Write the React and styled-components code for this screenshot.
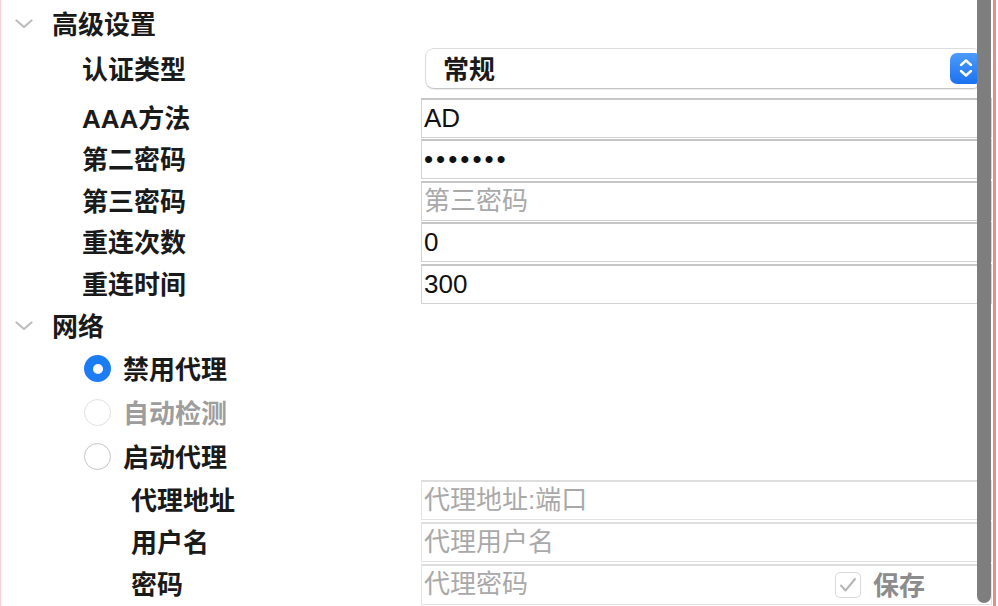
import React from "react";
import styled, { createGlobalStyle } from "styled-components";

const GlobalStyle = createGlobalStyle`
  html, body { margin: 0; padding: 0; background: #fff; }
  body {
    font-family: "Liberation Sans", "Noto Sans CJK SC", sans-serif;
    overflow: hidden;
  }
  * { box-sizing: border-box; }
`;

const Window = styled.div`
  position: relative;
  width: 998px;
  height: 606px;
  overflow: hidden;
  background: #fff;
  border-left: 1px solid #f3cfcf;
  padding: 3px 6px 0 0;
  display: flex;
  flex-direction: column;
  font-size: 26px;
  color: #1a1a1a;
`;

const SectionHeader = styled.div`
  height: 42px;
  flex: none;
  display: flex;
  align-items: center;
  gap: 19px;
  padding-left: 14px;
  font-weight: 700;
`;

const Text = styled.span`
  padding-bottom: ${(p) => (p.$nudge === undefined ? 3 : p.$nudge)}px;
  white-space: nowrap;
`;

const FieldRow = styled.div`
  flex: none;
  display: grid;
  grid-template-columns: ${(p) => 421 - 1 - p.$indent}px 1fr;
  align-items: center;
  height: ${(p) => p.$height || 42}px;
  padding-left: ${(p) => p.$indent}px;
`;

const SelectRow = styled(FieldRow)`
  height: auto;
  padding-top: 2px;
  padding-bottom: 8px;
`;

const Label = styled.span`
  font-weight: 700;
  color: #1a1a1a;
  white-space: nowrap;
  padding-top: ${(p) => p.$nudge || 0}px;
  padding-bottom: 3px;
`;

const PopUp = styled.div`
  height: 41px;
  margin: 0 10px 0 4px;
  background: #fff;
  border: 1px solid #dcdcdc;
  border-bottom-color: #c4c4c4;
  border-radius: 9px;
  box-shadow: 0 1px 1px rgba(0, 0, 0, 0.08);
  display: flex;
  align-items: center;
  justify-content: space-between;
  padding-left: 17px;
  padding-right: 0;
  font-weight: 700;
`;

const Stepper = styled.div`
  width: 32px;
  height: 31px;
  border-radius: 7px;
  background: linear-gradient(#4c9bf9, #1b72f0);
  display: flex;
  align-items: center;
  justify-content: center;
  margin-right: -1px;
`;

const InputBox = styled.input`
  display: block;
  width: 100%;
  height: 40px;
  margin: 0;
  padding: 0 2px;
  border: 1px solid ${(p) => (p.$light ? "#e3e3e3" : "#d2d2d2")};
  border-top: 2px solid ${(p) => (p.$light ? "#dedede" : "#c6c6c6")};
  outline: none;
  background: #fff;
  font-family: "Liberation Sans", "Noto Sans CJK SC", sans-serif;
  font-size: 26px;
  color: #111;
  letter-spacing: ${(p) => p.$spacing || 0}px;
  &::placeholder {
    color: #a9a9a9;
    opacity: 1;
  }
`;

const ComboBox = styled.div`
  height: 41px;
  margin-top: 1px;
  border: 1px solid #e3e3e3;
  border-top: 2px solid #dedede;
  display: flex;
  align-items: center;
  padding-right: 66px;
`;

const BareInput = styled.input`
  flex: 1;
  min-width: 0;
  height: 100%;
  border: none;
  outline: none;
  padding: 0 2px;
  background: transparent;
  font-family: "Liberation Sans", "Noto Sans CJK SC", sans-serif;
  font-size: 26px;
  &::placeholder {
    color: #a9a9a9;
    opacity: 1;
  }
`;

const CheckLabel = styled.label`
  display: flex;
  align-items: center;
  gap: 12px;
  font-weight: 700;
  color: #8c8c8c;
`;

const CheckBox = styled.span`
  width: 26px;
  height: 26px;
  border: 1.5px solid #d9d9d9;
  border-radius: 5px;
  background: #fff;
  display: flex;
  align-items: center;
  justify-content: center;
`;

const RadioRow = styled.label`
  flex: none;
  height: 44px;
  display: flex;
  align-items: center;
  gap: 12px;
  padding-left: 83px;
  font-weight: 700;
  color: ${(p) => (p.$disabled ? "#9d9d9d" : "#1a1a1a")};
`;

const RadioDot = styled.span`
  width: 27px;
  height: 27px;
  border-radius: 50%;
  flex: none;
  display: flex;
  align-items: center;
  justify-content: center;
  background: ${(p) => (p.$checked ? "#1c7cf4" : "#fff")};
  border: ${(p) =>
    p.$checked ? "none" : p.$disabled ? "1.5px solid #e0e0e0" : "1.5px solid #c4c4c4"};
  &::after {
    content: "";
    display: ${(p) => (p.$checked ? "block" : "none")};
    width: 10px;
    height: 10px;
    border-radius: 50%;
    background: #fff;
  }
`;

const Scrollbar = styled.div`
  position: absolute;
  right: 7px;
  top: -12px;
  bottom: 3px;
  width: 14px;
  border-radius: 7px;
  background: #7e7e7e;
`;

const EdgeLine = styled.div`
  position: absolute;
  right: 2px;
  top: 0;
  bottom: 0;
  width: 3px;
  background: #e68e8e;
`;

const Chevron = () => (
  <svg width="18" height="10" viewBox="0 0 18 10">
    <polyline
      points="1.5,1.5 9,8 16.5,1.5"
      fill="none"
      stroke="#bdbdbd"
      strokeWidth="2.2"
      strokeLinecap="round"
      strokeLinejoin="round"
    />
  </svg>
);

const StepperIcon = () => (
  <svg width="14" height="20" viewBox="0 0 14 20">
    <polyline points="2,7 7,2.5 12,7" fill="none" stroke="#fff" strokeWidth="2.4" strokeLinecap="round" strokeLinejoin="round" />
    <polyline points="2,13 7,17.5 12,13" fill="none" stroke="#fff" strokeWidth="2.4" strokeLinecap="round" strokeLinejoin="round" />
  </svg>
);

const CheckIcon = () => (
  <svg width="18" height="16" viewBox="0 0 18 16">
    <polyline points="2,8.5 6.5,13.5 16,2" fill="none" stroke="#b5b5b5" strokeWidth="2" strokeLinecap="round" strokeLinejoin="round" />
  </svg>
);

const fields = [
  { label: "AAA方法", value: "AD" },
  { label: "第二密码", value: "1234567", type: "password" },
  { label: "第三密码", placeholder: "第三密码", type: "password" },
  { label: "重连次数", value: "0" },
  { label: "重连时间", value: "300" },
];

const radios = [
  { label: "禁用代理", checked: true },
  { label: "自动检测", disabled: true },
  { label: "启动代理" },
];

export default function App() {
  return (
    <>
      <GlobalStyle />
      <Window>
        <SectionHeader>
          <Chevron />
          <Text $nudge={4}>高级设置</Text>
        </SectionHeader>
        <SelectRow $indent={81}>
          <Label $nudge={2}>认证类型</Label>
          <PopUp>
            <Text $nudge={1}>常规</Text>
            <Stepper>
              <StepperIcon />
            </Stepper>
          </PopUp>
        </SelectRow>
        {fields.map((f) => (
          <FieldRow key={f.label} $indent={81} $height={41.5}>
            <Label>{f.label}</Label>
            <InputBox
              type={f.type || "text"}
              readOnly
              value={f.value || ""}
              placeholder={f.placeholder}
              $spacing={f.type === "password" && f.value ? 3 : 0}
            />
          </FieldRow>
        ))}
        <SectionHeader>
          <Chevron />
          <Text>网络</Text>
        </SectionHeader>
        {radios.map((r) => (
          <RadioRow key={r.label} $disabled={r.disabled}>
            <RadioDot $checked={r.checked} $disabled={r.disabled} />
            <Text>{r.label}</Text>
          </RadioRow>
        ))}
        <FieldRow $indent={130}>
          <Label>代理地址</Label>
          <InputBox $light readOnly value="" placeholder="代理地址:端口" />
        </FieldRow>
        <FieldRow $indent={130}>
          <Label>用户名</Label>
          <InputBox $light readOnly value="" placeholder="代理用户名" />
        </FieldRow>
        <FieldRow $indent={130}>
          <Label>密码</Label>
          <ComboBox>
            <BareInput type="password" readOnly value="" placeholder="代理密码" />
            <CheckLabel>
              <CheckBox>
                <CheckIcon />
              </CheckBox>
              <Text $nudge={3}>保存</Text>
            </CheckLabel>
          </ComboBox>
        </FieldRow>
        <Scrollbar />
        <EdgeLine />
      </Window>
    </>
  );
}
